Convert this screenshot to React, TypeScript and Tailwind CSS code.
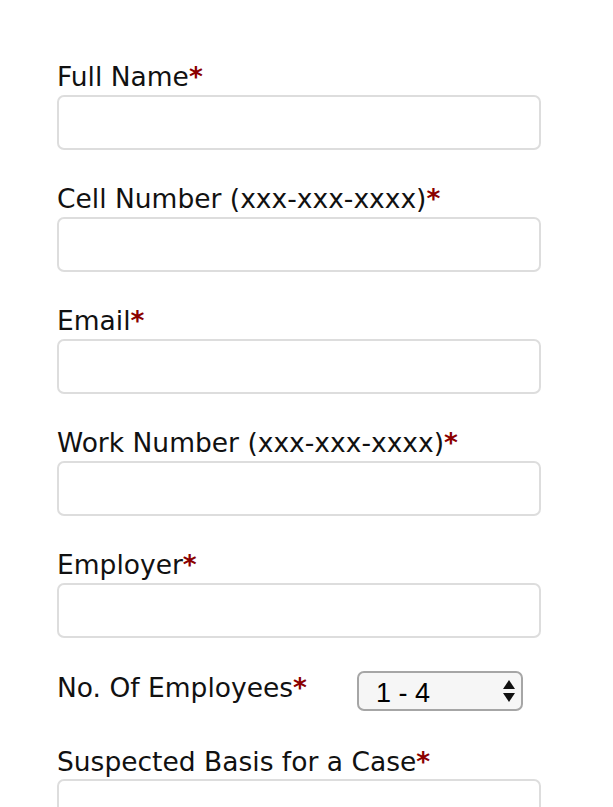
const fields = [
  "Full Name",
  "Cell Number (xxx-xxx-xxxx)",
  "Email",
  "Work Number (xxx-xxx-xxxx)",
  "Employer",
];

const Label = ({ text }: { text: string }) => (
  <label className="block text-[26.5px] leading-[30px] text-[#111]">
    {text}
    <span className="font-bold text-[#8b0000]">*</span>
  </label>
);

export default function App() {
  return (
    <div className="min-h-[807px] bg-white pl-[57px] pt-[62px] font-['DejaVu_Sans',sans-serif]">
      <div className="flex w-[484px] flex-col gap-[34px]">
        {fields.map((f) => (
          <div key={f} className="flex flex-col gap-[3px]">
            <Label text={f} />
            <input className="h-[55px] w-full rounded-[7px] border-2 border-[#dddddd] bg-white px-3 outline-none" />
          </div>
        ))}
      </div>
      <div className="mt-[33px] flex items-center">
        <div className="-mt-[6px] w-[300px]">
          <Label text="No. Of Employees" />
        </div>
        <div className="relative">
          <select className="h-[40px] w-[166px] appearance-none rounded-[7px] border-2 border-[#a6a6a6] bg-[#f6f6f6] pl-[17px] font-['Liberation_Sans',sans-serif] text-[27px] text-black outline-none">
            <option>1 - 4</option>
            <option>5 - 9</option>
            <option>10 - 24</option>
          </select>
          <svg
            className="pointer-events-none absolute right-[7px] top-[8px]"
            width="14"
            height="24"
            viewBox="0 0 14 24"
          >
            <path d="M7 1 L13 10 L1 10 Z" fill="#111" />
            <path d="M1 14 L13 14 L7 23 Z" fill="#111" />
          </svg>
        </div>
      </div>
      <div className="mt-[36px] flex w-[484px] flex-col gap-[2px]">
        <Label text="Suspected Basis for a Case" />
        <input className="h-[55px] w-full rounded-[7px] border-2 border-[#dddddd] bg-white px-3 outline-none" />
      </div>
    </div>
  );
}
